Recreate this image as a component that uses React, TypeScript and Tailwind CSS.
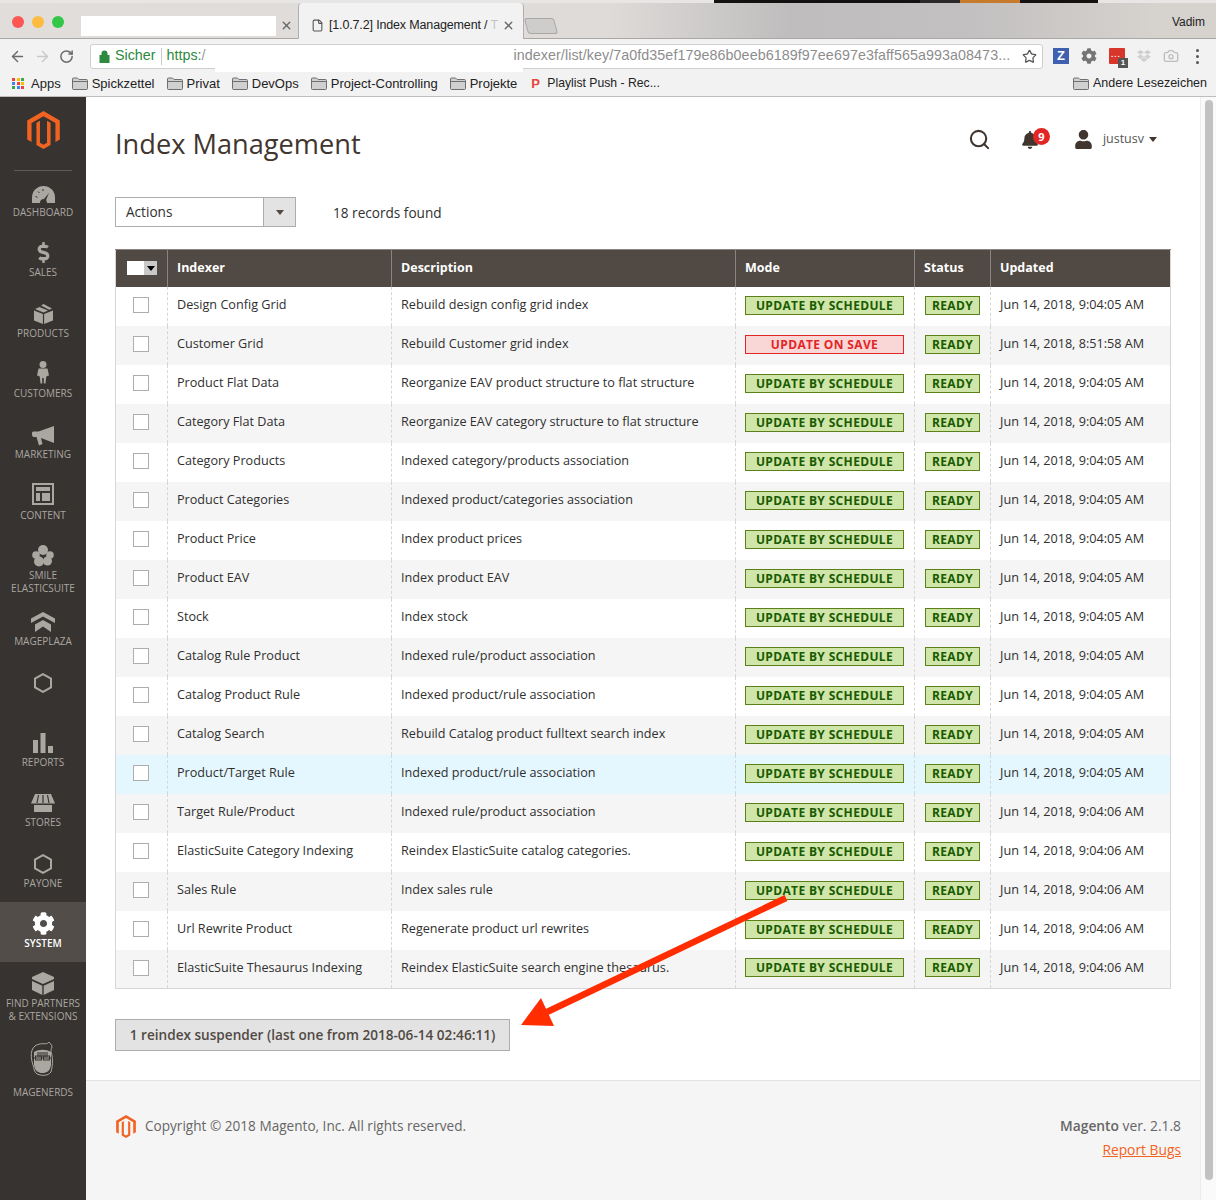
import { ArrowLeft, ArrowRight, RotateCw, Star, Search, X, File, Camera } from 'lucide-react';
import { FaCog, FaBell, FaUser, FaDropbox, FaDollarSign } from 'react-icons/fa';
import type { ReactNode } from 'react';

const OPEN = 'font-["Open_Sans",sans-serif]';

const rows = [
  ['Design Config Grid', 'Rebuild design config grid index', 'Jun 14, 2018, 9:04:05 AM'],
  ['Customer Grid', 'Rebuild Customer grid index', 'Jun 14, 2018, 8:51:58 AM'],
  ['Product Flat Data', 'Reorganize EAV product structure to flat structure', 'Jun 14, 2018, 9:04:05 AM'],
  ['Category Flat Data', 'Reorganize EAV category structure to flat structure', 'Jun 14, 2018, 9:04:05 AM'],
  ['Category Products', 'Indexed category/products association', 'Jun 14, 2018, 9:04:05 AM'],
  ['Product Categories', 'Indexed product/categories association', 'Jun 14, 2018, 9:04:05 AM'],
  ['Product Price', 'Index product prices', 'Jun 14, 2018, 9:04:05 AM'],
  ['Product EAV', 'Index product EAV', 'Jun 14, 2018, 9:04:05 AM'],
  ['Stock', 'Index stock', 'Jun 14, 2018, 9:04:05 AM'],
  ['Catalog Rule Product', 'Indexed rule/product association', 'Jun 14, 2018, 9:04:05 AM'],
  ['Catalog Product Rule', 'Indexed product/rule association', 'Jun 14, 2018, 9:04:05 AM'],
  ['Catalog Search', 'Rebuild Catalog product fulltext search index', 'Jun 14, 2018, 9:04:05 AM'],
  ['Product/Target Rule', 'Indexed product/rule association', 'Jun 14, 2018, 9:04:05 AM'],
  ['Target Rule/Product', 'Indexed rule/product association', 'Jun 14, 2018, 9:04:06 AM'],
  ['ElasticSuite Category Indexing', 'Reindex ElasticSuite catalog categories.', 'Jun 14, 2018, 9:04:06 AM'],
  ['Sales Rule', 'Index sales rule', 'Jun 14, 2018, 9:04:06 AM'],
  ['Url Rewrite Product', 'Regenerate product url rewrites', 'Jun 14, 2018, 9:04:06 AM'],
  ['ElasticSuite Thesaurus Indexing', 'Reindex ElasticSuite search engine thesaurus.', 'Jun 14, 2018, 9:04:06 AM'],
];

function MagentoLogo({ className }: { className: string }) {
  return (
    <svg viewBox="0 0 24 28" className={className} fill="#f26322">
      <path d="M12 0 24 7v14l-3.200 1.900V8.900L12 3.800 3.200 8.900v14L0 21V7z" />
      <path d="M12 28l-5.200-3V8.700l2.600-1.500v16.200l2.600 1.500 2.600-1.500V7.200l2.600 1.500V25z" />
    </svg>
  );
}

function Folder() {
  return (
    <svg width="16" height="13" viewBox="0 0 16 13" className="shrink-0">
      <path d="M.5 2a1 1 0 0 1 1-1h4l1.500 1.500h7.500a1 1 0 0 1 1 1V11.500a1 1 0 0 1-1 1h-13a1 1 0 0 1-1-1z" fill="#d0d0d0" stroke="#6f6f6f" />
      <path d="M.8 4.500h14.400" stroke="#6f6f6f" />
    </svg>
  );
}

const fill = '#aaa6a0';
const navItems: { label: ReactNode; icon: ReactNode; h: string; box?: string; active?: boolean }[] = [
  {
    label: 'Dashboard',
    h: 'h-[60px]',
    box: 'h-[27px] pt-[3px]',
    icon: (
      <svg width="23" height="17" viewBox="0 0 23 17" fill={fill}>
        <path d="M0 17v-5.500a11.500 11.500 0 0 1 23 0V17H15a4 4 0 0 0-1-3l3-7-5 6a4 4 0 0 0-4 4z" />
        <path d="M3.500 10.500l2 .8M6 5.500l1.500 1.500M11 3v2" stroke="#373330" />
      </svg>
    ),
  },
  { label: 'Sales', h: 'h-[61px]', icon: <FaDollarSign size={21} className="text-[#aaa6a0]" /> },
  {
    label: 'Products',
    h: 'h-[60px]',
    icon: (
      <svg width="19" height="20" viewBox="0 0 19 20" fill={fill}>
        <path d="M0 6.500 8.900 10v10L0 16.500zM19 6.500 10.100 10v10l8.900-3.500zM1 5l4.500-2 8.500 3.500L9.500 8.500zM7 1.500 9.500 0 18 4.500l-2.800 1.200z" />
      </svg>
    ),
  },
  {
    label: 'Customers',
    h: 'h-[61px]',
    box: 'h-[27px] pb-[2px]',
    icon: (
      <svg width="12" height="23" viewBox="0 0 12 23" fill={fill}>
        <circle cx="6" cy="3.500" r="3.500" />
        <path d="M1.500 7.500h9l1.500 7-2 .5-.8 1-.7 6.500H6.800V17H5.200v5.500H3.500L2.800 16l-.8-1L0 14.500z" />
      </svg>
    ),
  },
  {
    label: 'Marketing',
    h: 'h-[61px]',
    box: 'h-[27px] pt-[3px]',
    icon: (
      <svg width="22" height="20" viewBox="0 0 22 20" fill={fill}>
        <path d="M22 0v17L9 12l1.500 6-3.500 1.500L4.500 11H1L0 9V6.500L1 5.500h5.500z" />
      </svg>
    ),
  },
  {
    label: 'Content',
    h: 'h-[60px]',
    box: 'h-[27px] pb-[3px]',
    icon: (
      <svg width="22" height="22" viewBox="0 0 22 22" fill={fill}>
        <path fillRule="evenodd" d="M0 0h22v22H0zm2 2v18h18V2z" />
        <path d="M4 4h14v4H4zM4 10h4v8H4zM10 10h8v8h-8z" />
      </svg>
    ),
  },
  {
    label: (
      <>
        Smile
        <br />
        ElasticSuite
      </>
    ),
    h: 'h-[66px]',
    icon: (
      <svg width="22" height="22" viewBox="0 0 22 22" fill={fill}>
        <circle cx="11" cy="5" r="5" />
        <circle cx="4" cy="10" r="3.800" />
        <circle cx="18" cy="10" r="3.800" />
        <circle cx="7" cy="16.500" r="5" />
        <circle cx="15.500" cy="16" r="4.500" />
      </svg>
    ),
  },
  {
    label: 'Mageplaza',
    h: 'h-[61px]',
    icon: (
      <svg width="24" height="20" viewBox="0 0 24 20" fill={fill}>
        <path d="M12 0 24 6.500V11L12 4.500 0 11V6.500zM12 8l8 4.500V20l-8-5.500L4 20v-7.500z" />
      </svg>
    ),
  },
  {
    label: '',
    h: 'h-[60px]',
    icon: (
      <svg width="18" height="20" viewBox="0 0 18 20" fill="none" stroke={fill} strokeWidth="2">
        <path d="M9 1.100 17 5.600v8.800l-8 4.500-8-4.500V5.600z" />
      </svg>
    ),
  },
  {
    label: 'Reports',
    h: 'h-[60px]',
    icon: (
      <svg width="20" height="20" viewBox="0 0 20 20" fill={fill}>
        <path d="M0 7h5v13H0zM7.500 0h5v20h-5zM15 13h5v7h-5z" />
      </svg>
    ),
  },
  {
    label: 'Stores',
    h: 'h-[61px]',
    box: 'h-[27px] pt-[1px]',
    icon: (
      <svg width="24" height="18" viewBox="0 0 24 18" fill={fill}>
        <path d="M4 0h16l4 9.500H0z" />
        <path d="M3 11h18v7H3z" />
        <path d="M7.500 1 6 9M12 1v8M16.500 1 18 9" stroke="#373330" strokeWidth="1.200" />
      </svg>
    ),
  },
  {
    label: 'Payone',
    h: 'h-[60px]',
    icon: (
      <svg width="18" height="20" viewBox="0 0 18 20" fill="none" stroke={fill} strokeWidth="2">
        <path d="M9 1.100 17 5.600v8.800l-8 4.500-8-4.500V5.600z" />
      </svg>
    ),
  },
  { label: 'System', h: 'h-[60px]', active: true, icon: <FaCog size={23} className="text-white" /> },
  {
    label: (
      <>
        Find Partners
        <br />
        &amp; Extensions
      </>
    ),
    h: 'h-[66px]',
    icon: (
      <svg width="22" height="23" viewBox="0 0 22 23" fill={fill}>
        <path d="M11 0l11 5v2l-11 5L0 7V5z" />
        <path d="M0 9l10.300 4.800V23L0 18zM22 9l-10.300 4.800V23L22 18z" />
      </svg>
    ),
  },
  {
    label: 'Magenerds',
    h: 'h-[70px]',
    box: 'h-[50px] pb-[4px]',
    icon: (
      <svg width="26" height="36" viewBox="0 0 26 36" fill="none" stroke={fill}>
        <path d="M3 24C-1 12 2 4 10 3c4-1 7 1 9-2 1 2 3 2 3 5-1 2-1 3-1 5 2 5 2 12 0 20-3 4-9 4-14 2C4 31 4 27 3 24z" />
        <path d="M4 11c5-3 12-3 17 0v13c-1 6-4 8-8.500 8S5 30 4 24z" fill={fill} stroke="none" />
        <path d="M7 11h11v5H7z" fill="#373330" stroke="none" opacity=".55" />
        <path d="M3 17h19" stroke="#373330" />
        <rect x="5.500" y="15" width="6" height="4" stroke="#373330" />
        <rect x="13.500" y="15" width="6" height="4" stroke="#373330" />
      </svg>
    ),
  },
];

function Sidebar() {
  return (
    <aside className="w-[86px] shrink-0 bg-[#373330] flex flex-col">
      <div className="h-[74px] border-b border-[#5f5a56] mx-[14px] flex justify-center pt-[14px]">
        <MagentoLogo className="w-[35px] h-[38px]" />
      </div>
      <div className="flex flex-col">
        {navItems.map((item, i) => (
          <div
            key={i}
            className={`${item.h} flex flex-col items-center ${item.active ? 'bg-[#524d49] text-white font-semibold' : 'text-[#aaa6a0]'}`}
          >
            <div className={`${item.box ?? 'h-[27px]'} mt-[8px] flex items-center justify-center shrink-0`}>{item.icon}</div>
            <div className="text-[10px] leading-[13px] uppercase text-center whitespace-nowrap">{item.label}</div>
          </div>
        ))}
      </div>
    </aside>
  );
}

function Bookmark({ name }: { name: string }) {
  return (
    <div className="flex items-center gap-[4px]">
      <Folder />
      <span>{name}</span>
    </div>
  );
}

function BrowserChrome() {
  return (
    <header className={`h-[97px] shrink-0 font-["Liberation_Sans",sans-serif] text-[#222] border-b border-[#bdbdbd]`}>
      {/* bits of desktop behind the window */}
      <div className="h-[3px] flex bg-[#e8e6e4]">
        <div className="w-[714px]" />
        <div className="w-[206px] bg-[#141210]" />
        <div className="w-[40px] bg-[#2c2a28]" />
        <div className="w-[60px] bg-[#c77a2c]" />
        <div className="w-[78px] bg-[#141210]" />
      </div>
      <div className="relative h-[36px] bg-[linear-gradient(90deg,#e0dddb_0%,#dedbd9_50%,#bfbdbd_65%,#c2c0c0_80%,#d6d2ce_95%)] border-b border-[#a9a7a6] flex">
        <div className="w-[72px] flex items-center gap-[8px] pl-[12px] pt-[2px]">
          <span className="w-[12px] h-[12px] rounded-full bg-[#fc5753] shrink-0" />
          <span className="w-[12px] h-[12px] rounded-full bg-[#fdbc40] shrink-0" />
          <span className="w-[12px] h-[12px] rounded-full bg-[#33c748] shrink-0" />
        </div>
        <div className="w-[226px] flex items-center pl-[9px] pt-[10px] gap-[4px]">
          <div className="w-[195px] h-[20px] bg-white" />
          <X size={13} strokeWidth={2.5} className="text-[#666]" />
        </div>
        <div className="w-[226px] h-[36px] bg-[#f2f2f2] border-x border-[#b0aeae] rounded-t-[4px] flex items-center pl-[12px] pt-[8px] text-[12.5px] tracking-[-0.15px] whitespace-nowrap">
          <File size={13} className="text-[#555] shrink-0" />
          <span className="ml-[5px] w-[173px]">
            [1.0.7.2] Index Management / <span className="text-[#c4c4c4]">T</span>
          </span>
          <X size={13} strokeWidth={2.5} className="text-[#666] shrink-0" />
        </div>
        <div className="w-[30px] h-[16px] mt-[15px] bg-[#cfcdcc] border border-[#a9a7a6] rounded-[3px] skew-x-[15deg] ml-[2px]" />
        <div className="ml-auto pr-[11px] pt-[10px] text-[12px]">Vadim</div>
      </div>
      <div className="h-[32px] bg-[#f2f2f2] flex items-center pt-[2px]">
        <div className="w-[90px] flex items-center gap-[8px] pl-[9px] shrink-0">
          <ArrowLeft size={17} className="text-[#6a6a6a]" />
          <ArrowRight size={17} className="text-[#c9c9c9]" />
          <RotateCw size={15} strokeWidth={2.4} className="text-[#6a6a6a]" />
        </div>
        <div className="relative w-[953px] h-[25px] bg-white border border-[#cfcfcf] rounded-[3px] flex items-center text-[14.300px] pl-[8px] shrink-0">
          <svg width="11" height="13" viewBox="0 0 11 13" className="shrink-0">
            <path d="M2.500 5V3.500a3 3 0 0 1 6 0V5h2v8H.5V5z" fill="#2d8a3e" />
          </svg>
          <span className="ml-[5px] text-[#2d8a3e]">Sicher</span>
          <span className="mx-[5px] w-px h-[17px] bg-[#c9c9c9]" />
          <span className="text-[#2d8a3e]">https:</span>
          <span className="text-[#999]">/</span>
          <span className="ml-[308px] text-[#8d8d8d] tracking-[0.07px] whitespace-nowrap">
            indexer/list/key/7a0fd35ef179e86b0eeb6189f97ee697e3faff565a993a08473...
          </span>
          <Star size={15} className="absolute right-[5px] top-[4px] text-[#555]" />
          {/* blanked part of the url, it runs a little below the bar */}
          <div className="absolute left-[124px] top-[1px] w-[298px] h-[23px] bg-white" />
          <div className="absolute left-[124px] top-[22px] w-[308px] h-[5px] bg-white" />
        </div>
        <div className="flex items-center pl-[10px] gap-[12px]">
          <span className="w-[16px] h-[16px] bg-[#3f5fb0] text-white text-[13px] font-bold leading-[16px] text-center">Z</span>
          <FaCog size={16} className="text-[#757575]" />
          <span className="relative w-[16px] h-[16px] bg-[#d9362b] rounded-[1px]">
            <span className="absolute left-[2px] top-[5px] text-white text-[8px] leading-[4px] tracking-[1px] font-bold">...</span>
            <span className="absolute -right-[3px] -bottom-[4px] w-[10px] h-[10px] bg-[#555] text-white text-[8px] leading-[10px] text-center font-bold">1</span>
          </span>
          <FaDropbox size={14} className="text-[#cfcfcf]" />
          <Camera size={16} className="text-[#bdbdbd]" />
          <span className="flex flex-col gap-[3px] ml-[5px]">
            <i className="w-[3px] h-[3px] rounded-full bg-[#555]" />
            <i className="w-[3px] h-[3px] rounded-full bg-[#555]" />
            <i className="w-[3px] h-[3px] rounded-full bg-[#555]" />
          </span>
        </div>
      </div>
      <div className="h-[25px] bg-[#f2f2f2] flex items-center pl-[12px] pr-[9px] text-[13px]">
        <div className="flex items-center gap-[6px] mr-[11px]">
          <span className="grid grid-cols-3 gap-[1px] w-[13px]">
            {['#e8453c', '#fbbc05', '#34a853', '#4285f4', '#e8453c', '#fbbc05', '#34a853', '#4285f4', '#e8453c'].map((c, i) => (
              <i key={i} style={{ backgroundColor: c }} className="w-[3px] h-[3px]" />
            ))}
          </span>
          <span>Apps</span>
        </div>
        <div className="flex items-center gap-[12px]">
          <Bookmark name="Spickzettel" />
          <Bookmark name="Privat" />
          <Bookmark name="DevOps" />
          <Bookmark name="Project-Controlling" />
          <Bookmark name="Projekte" />
          <div className="flex items-center gap-[6px] ml-[2px] text-[12.200px]">
            <span className="w-[10px] text-[#e8453c] font-bold text-[13px] leading-none">P</span>
            <span>Playlist Push - Rec...</span>
          </div>
        </div>
        <div className="ml-auto text-[12.500px]">
          <Bookmark name="Andere Lesezeichen" />
        </div>
      </div>
    </header>
  );
}

function Checkbox() {
  return <div className="w-[16px] h-[16px] bg-white border border-[#adadad] ml-auto mr-[18px]" />;
}

function Badge({ text, red, className }: { text: string; red?: boolean; className: string }) {
  return (
    <div
      className={`${className} h-[19px] leading-[17px] border text-center text-[12px] font-bold tracking-[0.35px] ${
        red ? 'bg-[#fad7d7] border-[#e22626] text-[#e22626]' : 'bg-[#d0e5a9] border-[#5b8116] text-[#185b00]'
      }`}
    >
      {text}
    </div>
  );
}

function IndexTable() {
  const th = 'h-[37px] px-[9px] text-left text-[12.500px] font-bold text-white border-l border-[#8a837f] align-middle';
  const td = 'px-[9px] text-[12.650px] text-[#303030] border-l border-dashed border-[#d6d6d6] align-middle pb-[3px]';
  return (
    <table className="w-[1055px] table-fixed border-collapse border-x border-b border-[#d6d6d6]">
      <colgroup>
        <col className="w-[52px]" />
        <col className="w-[224px]" />
        <col className="w-[344px]" />
        <col className="w-[179px]" />
        <col className="w-[76px]" />
        <col className="w-[180px]" />
      </colgroup>
      <thead>
        <tr className="bg-[#514943] border-t border-[#8a837f]">
          <th className="h-[37px] pl-[11px] align-middle">
            <div className="w-[30px] h-[14px] bg-white flex justify-end">
              <div className="w-[13px] h-[14px] bg-[#c9c9c9] flex items-center justify-center">
                <span className="border-x-[4px] border-x-transparent border-t-[5px] border-t-black" />
              </div>
            </div>
          </th>
          <th className={th}>Indexer</th>
          <th className={th}>Description</th>
          <th className={th}>Mode</th>
          <th className={th}>Status</th>
          <th className={th}>Updated</th>
        </tr>
      </thead>
      <tbody>
        {rows.map((r, i) => (
          <tr key={r[0]} className={`h-[39px] ${i === 12 ? 'bg-[#e5f7fe]' : i % 2 === 1 ? 'bg-[#f5f5f5]' : 'bg-white'}`}>
            <td className="align-middle pb-[2px]">
              <Checkbox />
            </td>
            <td className={td}>{r[0]}</td>
            <td className={td}>{r[1]}</td>
            <td className="pl-[9px] pb-[2px] border-l border-dashed border-[#d6d6d6] align-middle">
              <Badge className="w-[159px]" text={i === 1 ? 'UPDATE ON SAVE' : 'UPDATE BY SCHEDULE'} red={i === 1} />
            </td>
            <td className="pl-[10px] pb-[2px] border-l border-dashed border-[#d6d6d6] align-middle">
              <Badge className="w-[55px]" text="READY" />
            </td>
            <td className={`${td} whitespace-nowrap`}>{r[2]}</td>
          </tr>
        ))}
      </tbody>
    </table>
  );
}

export default function App() {
  return (
    <div className={`relative w-[1216px] h-[1200px] overflow-hidden bg-white flex flex-col ${OPEN}`}>
      <BrowserChrome />
      <div className="flex flex-1 min-h-0">
        <Sidebar />
        <main className="w-[1114px] shrink-0 flex flex-col">
          <div className="flex-1 pl-[29px] pr-[29px]">
            <div className="h-[100px] flex items-start justify-between pr-[14px]">
              <h1 className="mt-[27px] text-[27.200px] leading-[40px] text-[#41362f]">Index Management</h1>
              <div className="flex items-center mt-[31px] text-[#41362f]">
                <Search size={23} strokeWidth={2.2} />
                <div className="relative ml-[30px] mr-[35px]">
                  <FaBell size={18} />
                  <span className="absolute -top-[3px] left-[12px] w-[17px] h-[17px] rounded-full bg-[#e22626] text-white text-[11px] font-bold leading-[17px] text-center">9</span>
                </div>
                <FaUser size={19} />
                <span className="ml-[10px] text-[12.500px] text-[#555]">justusv</span>
                <span className="ml-[5px] border-x-[4px] border-x-transparent border-t-[5px] border-t-[#41362f]" />
              </div>
            </div>
            <div className="h-[52px] flex items-start">
              <div className="w-[181px] h-[30px] flex border border-[#adadad] text-[13.600px] text-[#303030]">
                <div className="flex-1 pl-[10px] leading-[28px]">Actions</div>
                <div className="w-[32px] bg-[#e3e3e3] border-l border-[#adadad] flex items-center justify-center">
                  <span className="border-x-[4px] border-x-transparent border-t-[5px] border-t-[#514943]" />
                </div>
              </div>
              <span className="ml-[37px] text-[13.600px] leading-[32px] text-[#303030]">18 records found</span>
            </div>
            <IndexTable />
            <div className="mt-[30px] w-[395px] h-[32px] bg-[#e3e3e3] border border-[#adadad] text-center text-[13.600px] leading-[30px] font-semibold text-[#514943] whitespace-nowrap">
              1 reindex suspender (last one from 2018-06-14 02:46:11)
            </div>
          </div>
          <footer className="h-[120px] shrink-0 bg-[#f5f5f5] border-t border-[#e3e3e3] flex items-start justify-between pl-[29px] pr-[19px] text-[13.600px] text-[#666]">
            <div className="flex items-center mt-[33px] h-[24px]">
              <MagentoLogo className="w-[20px] h-[23px] ml-px" />
              <span className="ml-[9px]">Copyright © 2018 Magento, Inc. All rights reserved.</span>
            </div>
            <div className="mt-[33px] text-right leading-[24px] text-[13.800px]">
              <div>
                <b className="font-semibold">Magento</b> ver. 2.1.8
              </div>
              <div className="text-[#f26322] underline">Report Bugs</div>
            </div>
          </footer>
        </main>
        <div className="w-[16px] shrink-0 bg-[#fafafa] border-l border-[#ececec] pl-[4px] pt-[3px]">
          <div className="w-[8px] h-[1080px] rounded-full bg-[#c2c2c2]" />
        </div>
      </div>
      {/* annotation arrow drawn on the screenshot */}
      <svg className="absolute left-0 top-0 pointer-events-none" width="1216" height="1200" viewBox="0 0 1216 1200">
        <path d="M786 898 547 1012" stroke="#ff2d00" strokeWidth="6.500" />
        <path d="M521 1025l20-27 13 28z" fill="#ff2d00" />
      </svg>
    </div>
  );
}
